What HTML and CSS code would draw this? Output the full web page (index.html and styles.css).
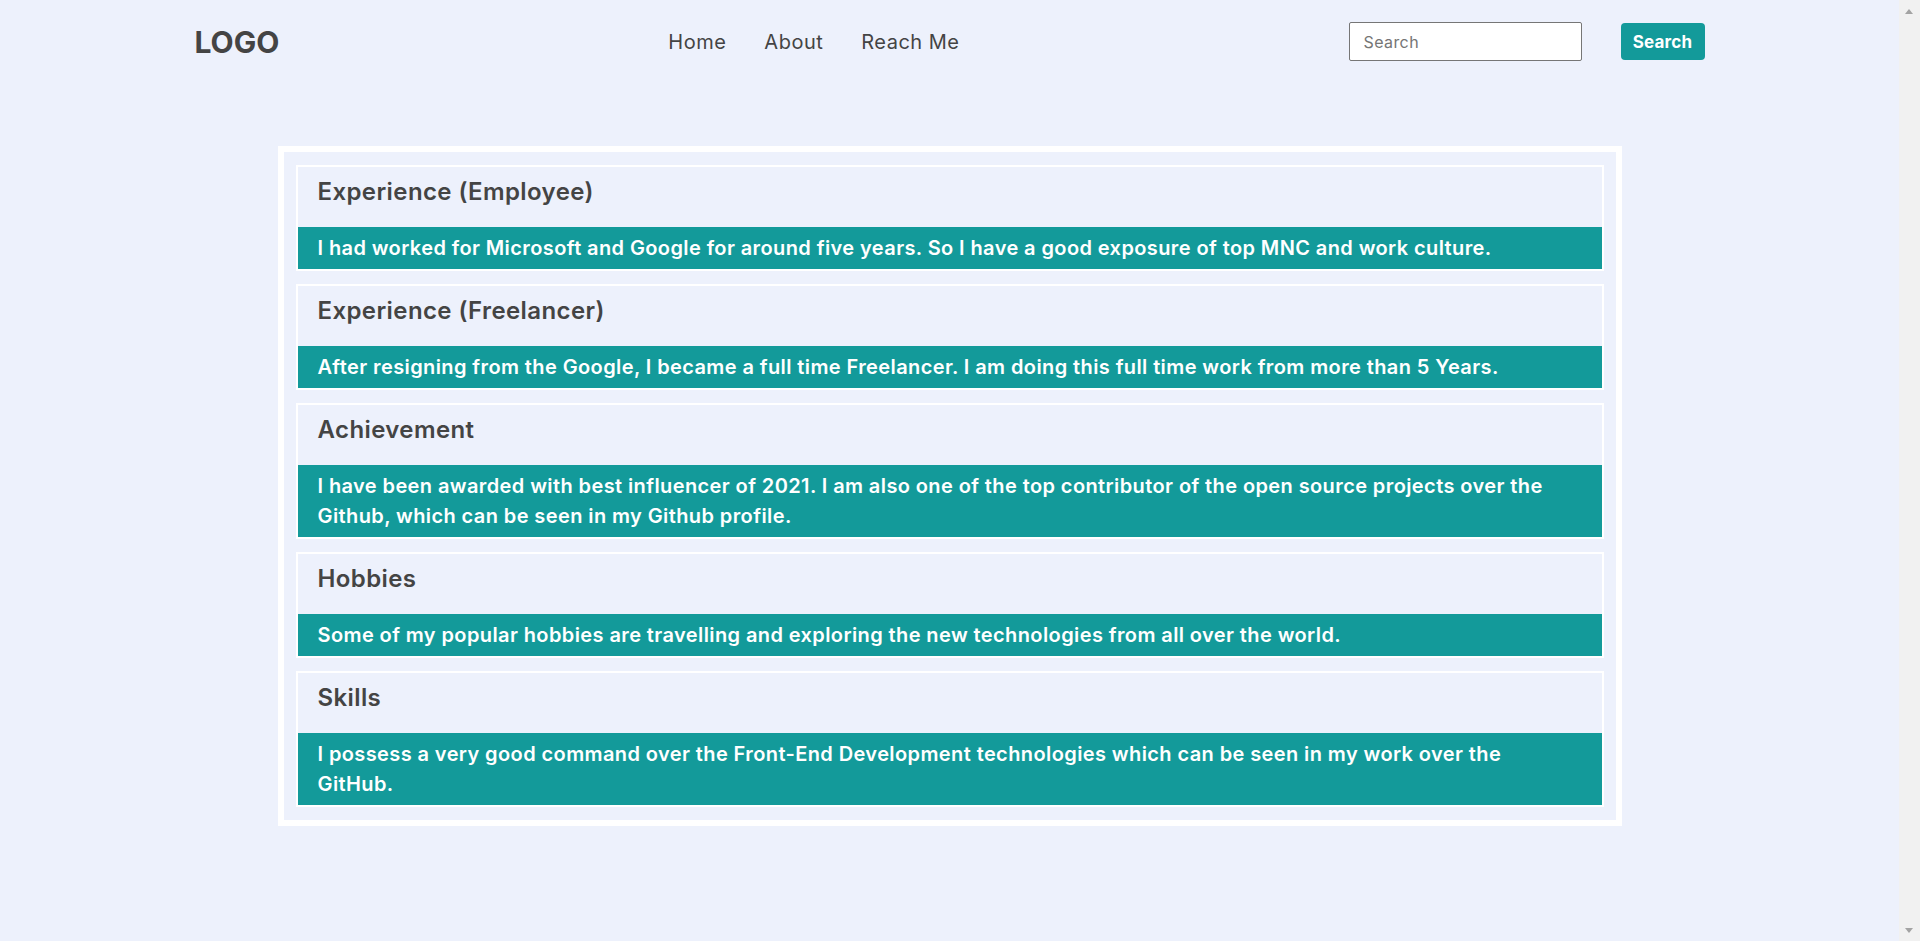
FILE: index.html
```html
<!DOCTYPE html>
<html lang="en">
<head>
<meta charset="utf-8">
<title>Profile</title>
<link rel="stylesheet" href="styles.css">
</head>
<body>
<header class="topbar">
  <div class="logo">LOGO</div>
  <nav class="nav">
    <a href="#" class="nav-link">Home</a>
    <a href="#" class="nav-link">About</a>
    <a href="#" class="nav-link">Reach Me</a>
  </nav>
  <form class="search">
    <input class="search-input" type="text" placeholder="Search">
    <button class="search-btn" type="button">Search</button>
  </form>
</header>
<main class="panel">
  <section class="card">
    <h3 class="card-title">Experience (Employee)</h3>
    <p class="card-text">I had worked for Microsoft and Google for around five years. So I have a good exposure of top MNC and work culture.</p>
  </section>
  <section class="card">
    <h3 class="card-title">Experience (Freelancer)</h3>
    <p class="card-text">After resigning from the Google, I became a full time Freelancer. I am doing this full time work from more than 5 Years.</p>
  </section>
  <section class="card">
    <h3 class="card-title">Achievement</h3>
    <p class="card-text">I have been awarded with best influencer of 2021. I am also one of the top contributor of the open source projects over the Github, which can be seen in my Github profile.</p>
  </section>
  <section class="card">
    <h3 class="card-title">Hobbies</h3>
    <p class="card-text">Some of my popular hobbies are travelling and exploring the new technologies from all over the world.</p>
  </section>
  <section class="card">
    <h3 class="card-title">Skills</h3>
    <p class="card-text">I possess a very good command over the Front-End Development technologies which can be seen in my work over the GitHub.</p>
  </section>
</main>
<div class="scrollbar" aria-hidden="true">
  <span class="arrow arrow-up"></span>
  <span class="arrow arrow-down"></span>
</div>
</body>
</html>
```
FILE: styles.css
```css
* {
  box-sizing: border-box;
}
body {
  margin: 0 21px 0 0;
  background: #edf1fc;
  font-family: Inter, "Open Sans", sans-serif;
  color: #444;
}
.topbar {
  width: 1522px;
  margin: 0 auto;
  height: 83px;
  padding: 0 6px 0 6px;
  display: flex;
  align-items: center;
  justify-content: space-between;
}
.logo {
  font-size: 30px;
  font-weight: 700;
  color: #444;
}
.nav {
  display: flex;
  gap: 38px;
}
.nav-link {
  font-size: 20px;
  letter-spacing: 0.5px;
  color: #444;
  text-decoration: none;
}
.search {
  display: flex;
  align-items: center;
  gap: 39px;
}
.search-input {
  width: 233px;
  height: 39px;
  border: 1px solid #767676;
  border-radius: 2px;
  background: #fff;
  padding: 0 14px;
  font-family: inherit;
  font-size: 16px;
  letter-spacing: 0.4px;
  color: #444;
}
.search-input::placeholder {
  color: #757575;
}
.search-btn {
  width: 84px;
  height: 37px;
  border: none;
  border-radius: 4px;
  background: #139a9a;
  color: #fff;
  font-family: inherit;
  font-size: 17px;
  font-weight: 700;
  letter-spacing: 0.2px;
}
.panel {
  width: 1344px;
  margin: 63px auto 0;
  border: 6px solid #fff;
  padding: 13px 12px;
  display: flex;
  flex-direction: column;
  gap: 13px;
}
.card {
  border: 2px solid #fff;
}
.card-title {
  margin: 0;
  height: 60px;
  padding: 10px 20px 0;
  font-size: 24px;
  line-height: 29px;
  font-weight: 600;
  letter-spacing: 0.4px;
  color: #444;
}
.card-text {
  margin: 0;
  background: #139a9a;
  color: #fff;
  padding: 6px 20px;
  font-size: 20px;
  font-weight: 600;
  line-height: 30px;
  letter-spacing: 0.4px;
}
.scrollbar {
  position: fixed;
  top: 0;
  right: 0;
  width: 21px;
  height: 100vh;
  background: #f1f1f1;
}
.arrow {
  position: absolute;
  left: 6px;
  width: 0;
  height: 0;
  border-left: 4.5px solid transparent;
  border-right: 4.5px solid transparent;
}
.arrow-up {
  top: 9px;
  border-bottom: 5px solid #a3a3a3;
}
.arrow-down {
  bottom: 8px;
  border-top: 5px solid #a3a3a3;
}
```
